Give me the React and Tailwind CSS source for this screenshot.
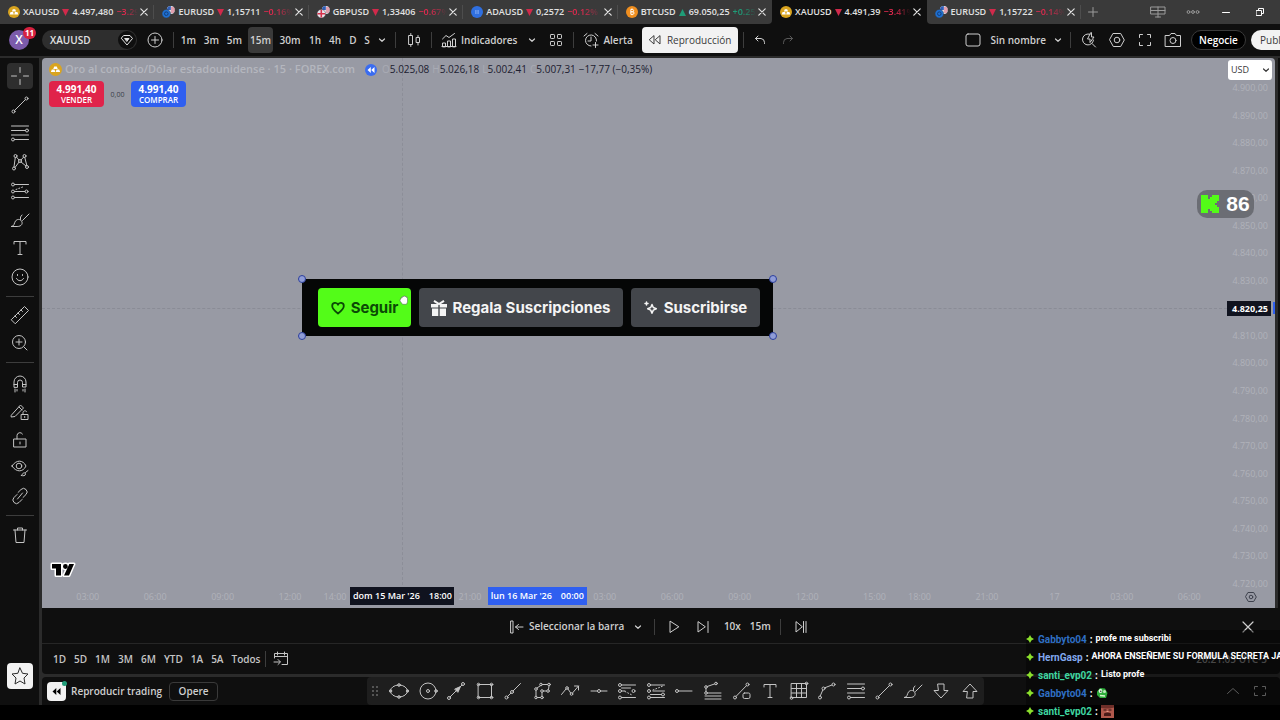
import React from "react";

function Ic({ size = 20, sw = 1, className = "", children }) {
  return (
    <svg width={size} height={size} viewBox={`0 0 ${size} ${size}`} fill="none" stroke="currentColor" strokeWidth={sw} strokeLinecap="round" strokeLinejoin="round" className={`shrink-0 ${className}`} aria-hidden="true">
      {children}
    </svg>
  );
}

const Chevron = ({ className = "" }) => (
  <Ic size={8} sw={1.2} className={className}><path d="M1.5 3 4 5.300 6.500 3" /></Ic>
);
const Close = ({ size = 8 }) => (
  <Ic size={size} sw={1.2}><path d={size === 8 ? "M.8.8l6.4 6.4M7.2.8.8 7.2" : "M1 1l10 10M11 1 1 11"} /></Ic>
);
const Divider = ({ className = "" }) => <span className={`h-4 w-px shrink-0 bg-[#3d3d3d] ${className}`} />;

/* ---------- symbol logos ---------- */
const Gold = ({ size = 12 }) => (
  <svg width={size} height={size} viewBox="0 0 12 12" className="shrink-0" aria-hidden="true">
    <circle cx="6" cy="6" r="6" fill="#d9a41f" />
    <path d="M4.8 3.200h2.400l.9 2.300H3.900zM2.600 6h2.500l.7 2.400H1.700zM6.900 6h2.500l.9 2.400H6.200z" fill="#fff" />
  </svg>
);
const Pair = ({ gbp }) => (
  <svg width="13" height="12" viewBox="0 0 13 12" className="shrink-0" aria-hidden="true">
    <circle cx="8.800" cy="4" r="4" fill="#e8e8f0" />
    <path d="M8.800 2h3.400M8.800 4h4M9 6h3" stroke="#d9455c" strokeWidth=".9" />
    <path d="M4.900 3.200A4 4 0 0 1 8.800 0v4H4.800z" fill="#2f5fb8" />
    <circle cx="4.300" cy="7.700" r="4.300" fill={gbp ? "#e9e4ee" : "#1f6fd0"} stroke="#3a3a3a" strokeWidth=".5" />
    {gbp ? <path d="M4.300 3.800v7.800M.4 7.700h7.800" stroke="#d6324b" strokeWidth="1.600" /> : <circle cx="4.300" cy="7.700" r="1.800" fill="none" stroke="#123a72" strokeWidth=".9" />}
  </svg>
);
const Ada = () => (
  <svg width="12" height="12" viewBox="0 0 12 12" className="shrink-0" aria-hidden="true">
    <circle cx="6" cy="6" r="6" fill="#2f6fe0" />
    <path d="M4.200 5h3.600M4.200 7h3.600" stroke="#b9d2ff" strokeWidth="1" strokeDasharray="1 .4" />
  </svg>
);
const Btc = () => (
  <svg width="12" height="12" viewBox="0 0 12 12" className="shrink-0" aria-hidden="true">
    <circle cx="6" cy="6" r="6" fill="#ef8e1f" />
    <path d="M4.800 3.500h1.700a1.100 1.100 0 0 1 0 2.300H4.800zM4.800 5.800h2a1.200 1.200 0 0 1 0 2.500h-2zM5.500 2.700v.8M6.500 2.700v.8M5.500 8.300v.8M6.500 8.300v.8" fill="none" stroke="#fff" strokeWidth=".9" />
  </svg>
);

const tabs = [
  { s: "XAUUSD", p: "4.497,480", c: "−3.29%", logo: <Gold /> },
  { s: "EURUSD", p: "1,15711", c: "−0.16%", logo: <Pair /> },
  { s: "GBPUSD", p: "1,33406", c: "−0.67%", logo: <Pair gbp /> },
  { s: "ADAUSD", p: "0,2572", c: "−0.12%", logo: <Ada /> },
  { s: "BTCUSD", p: "69.050,25", c: "+0.25%", logo: <Btc />, up: true },
  { s: "XAUUSD", p: "4.491,39", c: "−3.41%", logo: <Gold />, active: true },
  { s: "EURUSD", p: "1,15722", c: "−0.14%", logo: <Pair /> },
];

function TabBar() {
  return (
    <header className="flex h-6 shrink-0 items-stretch bg-[#0f0f0f] text-[#e2e2e2]">
      <nav className="flex min-w-0 flex-1" aria-label="Pestañas">
        {tabs.map((t, i) => (
          <div key={i} className={`flex min-w-0 flex-1 basis-0 items-center pl-2 pr-[5px] ${t.active ? "bg-[#0f0f0f]" : "bg-[#3a3a3a]"} ${(tabs[i + 1] || {}).active ? "rounded-br" : ""} ${(tabs[i - 1] || {}).active ? "rounded-bl" : ""}`}>
            <a href="#tab" className="flex min-w-0 flex-1 items-center whitespace-nowrap text-[9px] font-semibold">
              {t.logo}
              <span className="ml-[3px]">{t.s}</span>
              <svg width="7" height="7" viewBox="0 0 7 7" className="mx-[3px] shrink-0" aria-hidden="true">
                <path d={t.up ? "M3.500 0 7 7H0z" : "M0 0h7L3.500 7z"} fill={t.up ? "#1f9c78" : "#d02a4b"} />
              </svg>
              <span>{t.p}</span>
              <span className={`ml-[3px] min-w-0 flex-1 overflow-hidden [mask-image:linear-gradient(to_right,#000_40%,transparent)] ${t.up ? "text-[#1f9c78]" : "text-[#e02a4f]"}`}>{t.c}</span>
            </a>
            <button aria-label="Cerrar pestaña" className="flex w-3 shrink-0 justify-center"><Close /></button>
            <span className={`-mr-[5px] ml-[3px] h-3.5 w-px ${t.active || (tabs[i + 1] || {}).active ? "" : "bg-[#4d4d4d]"}`} />
          </div>
        ))}
      </nav>
      <div className="flex w-[199px] shrink-0 items-center bg-[#3a3a3a] text-[#9a9a9a]">
        <button aria-label="Nueva pestaña" className="flex w-6 justify-center"><Ic size={10}><path d="M5 .5v9M.5 5h9" /></Ic></button>
        <button aria-label="Diseños" className="ml-[35px] flex w-9 justify-center">
          <Ic size={16}><path d="M1 3h14v7H1zM1 6.500h14M8 3v10M5.500 13h5" /></Ic>
        </button>
        <button aria-label="Más" className="flex w-[34px] justify-center">
          <Ic size={14}><circle cx="2.500" cy="7" r="1.400" /><circle cx="7" cy="7" r="1.400" /><circle cx="11.500" cy="7" r="1.400" /></Ic>
        </button>
        <button aria-label="Minimizar" className="flex w-8 justify-center text-white"><Ic size={8}><path d="M.5 4.500h7" /></Ic></button>
        <button aria-label="Restaurar" className="flex w-9 justify-center text-white">
          <Ic size={8}><path d="M.5 2.500h5v5h-5zM2.500 2.500v-2h5v5h-2" /></Ic>
        </button>
      </div>
    </header>
  );
}

const intervals = [
  ["1m", "w-[23px]"], ["3m", "w-[23px]"], ["5m", "w-[23px]"], ["15m", "w-[25px] mx-[2px] bg-[#3a3a3a] rounded h-[26px]"],
  ["30m", "w-[30px]"], ["1h", "w-5"], ["4h", "w-5"], ["D", "w-4"], ["S", "w-3"],
];

function Toolbar() {
  return (
    <div className="flex h-8 shrink-0 items-center overflow-hidden bg-[#0f0f0f] text-[10px] font-semibold text-[#cfcfcf]">
      <button aria-label="Cuenta" className="relative ml-[9px] flex size-5 shrink-0 items-center justify-center rounded-full bg-[#7b5bab] text-[12px] text-white">
        X
        <span className="absolute -right-[7px] -top-[3px] flex h-3 w-[13px] items-center justify-center rounded-full bg-[#d7213f] text-[8px] font-bold">11</span>
      </button>
      <button className="ml-[13px] flex h-5 w-[95px] shrink-0 items-center justify-between rounded-full bg-[#2e2e2e] pl-2 pr-[1px] text-[#e2e2e2]">
        XAUUSD
        <span className="flex size-[18px] items-center justify-center rounded-full bg-[#0f0f0f]">
          <Ic size={14}><path d="M4 2.500h6l2.500 3L7 12 1.500 5.500z" /><path d="M5 5.500h4L7 8.200z" fill="currentColor" /></Ic>
        </span>
      </button>
      <button aria-label="Comparar" className="ml-2 flex w-5 shrink-0 justify-center"><Ic size={16}><circle cx="8" cy="8" r="7" /><path d="M8 4.500v7M4.500 8h7" /></Ic></button>
      <Divider className="ml-2" />
      <div className="ml-[3px] flex items-center">
        {intervals.map(([t, c]) => <button key={t} className={`shrink-0 text-center ${c}`}>{t}</button>)}
      </div>
      <button aria-label="Más intervalos" className="ml-[1px] flex w-4 shrink-0 justify-center"><Chevron /></button>
      <Divider className="ml-[5px]" />
      <button aria-label="Velas" className="flex w-[35px] shrink-0 justify-center">
        <Ic size={16}><path d="M3 3.500h3.500v9H3zM4.800 1.500v2M4.800 12.500v2M10.500 5.500h3v5h-3zM12 3.500v2M12 10.500v2.500" /></Ic>
      </button>
      <Divider />
      <button className="ml-[9px] flex shrink-0 items-center gap-1">
        <Ic size={16}><path d="M1.500 14.500V11h3v3.500zM6.500 14.500V9h3v5.500zM11.500 14.500V7h3v7.500zM1 14.500h14M1.500 7l3.500-3.500 3 2L13.500 1.500" /></Ic>
        Indicadores
      </button>
      <button aria-label="Favoritos" className="ml-[7px] flex w-4 shrink-0 justify-center"><Chevron /></button>
      <button aria-label="Plantillas" className="ml-2 flex w-4 shrink-0 justify-center">
        <Ic size={14}><rect x="1.500" y="1.500" width="4" height="4" rx=".7" /><rect x="8.500" y="1.500" width="4" height="4" rx=".7" /><rect x="1.500" y="8.500" width="4" height="4" rx=".7" /><rect x="8.500" y="8.500" width="4" height="4" rx=".7" /></Ic>
      </button>
      <Divider className="ml-[9px]" />
      <button className="ml-[9px] flex shrink-0 items-center gap-1">
        <Ic size={16}><path d="M13.500 9A5.500 5.500 0 1 0 8 14M8 5v4H5M1 4l3-2.500M12 1.500 15 4M12.500 10.500v5M10 13h5" /></Ic>
        Alerta
      </button>
      <button className="ml-[9px] flex h-[26px] w-24 shrink-0 items-center justify-center gap-[5px] rounded bg-[#f2f2f2] font-medium text-[#3a3a3a]">
        <Ic size={14}><path d="M6 3v8L1.500 7zM12 3v8L7.500 7z" /></Ic>
        Reproducción
      </button>
      <Divider className="ml-[5px]" />
      <button aria-label="Deshacer" className="ml-[6px] flex w-5 shrink-0 justify-center"><Ic size={12}><path d="M4 2 1.500 4.500 4 7M1.500 4.500H7A4 4 0 0 1 10.500 8.500V9.500" /></Ic></button>
      <button aria-label="Rehacer" className="ml-2 flex w-5 shrink-0 justify-center text-[#5a5a5a]"><Ic size={12}><path d="M8 2l2.500 2.500L8 7M10.500 4.500H5A4 4 0 0 0 1.500 8.500V9.500" /></Ic></button>
      <div className="ml-auto flex shrink-0 items-center">
        <button className="flex items-center gap-[9px]">
          <Ic size={16}><rect x="1" y="2" width="14" height="12" rx="2" /></Ic>
          Sin nombre
        </button>
        <button aria-label="Diseños guardados" className="ml-1 flex w-4 justify-center"><Chevron /></button>
        <Divider className="ml-1" />
        <button aria-label="Búsqueda" className="ml-1 flex w-7 justify-center">
          <Ic size={16}><path d="M9 2.300A5.500 5.500 0 1 0 12.500 8M11 11.500l3.500 3.500M9.500 1 6.500 7H9v3.500L13 5h-2.500V1z" /></Ic>
        </button>
        <button aria-label="Configuración" className="flex w-7 justify-center">
          <Ic size={16}><path d="M4.300 1.500h7.400L15.300 8l-3.600 6.500H4.300L.7 8z" /><circle cx="8" cy="8" r="2.800" /></Ic>
        </button>
        <button aria-label="Pantalla completa" className="flex w-7 justify-center">
          <Ic size={14}><path d="M1.500 4.500v-3h3M9.500 1.500h3v3M12.500 9.500v3h-3M4.500 12.500h-3v-3" /></Ic>
        </button>
        <button aria-label="Captura" className="flex w-7 justify-center">
          <Ic size={18}><path d="M1.500 4.500h4L7 2.500h4l1.500 2h4v11h-15z" /><circle cx="9" cy="9.500" r="3" /></Ic>
        </button>
        <button className="ml-1 flex h-5 w-[55px] items-center justify-center rounded-full border border-[#3a3a3a] bg-black text-white">Negocie</button>
        <button className="ml-[5px] flex h-5 w-[29px] items-center overflow-hidden rounded-l-full bg-[#f2f2f2] pl-[9px] font-medium text-[#3a3a3a]">Publicar</button>
      </div>
    </div>
  );
}

/* ---------- drawing tools, drawn on a 20px square ---------- */
const dot = (cx, cy, r = 1.500) => <circle cx={cx} cy={cy} r={r} />;
const I = {
  cross: <path d="M10 1.500v5M10 13.500v5M1.500 10h5M13.500 10h5" />,
  trend: <>{dot(3.500, 16.500)}{dot(16.500, 3.500)}<path d="M4.600 15.400 15.400 4.600" /></>,
  fib: <><path d="M1.500 3h17M1.500 7.500h14M1.500 12h17M4.500 16.500h14" />{dot(17, 7.500)}{dot(3, 16.500)}</>,
  pattern: <>{dot(4, 16.500)}{dot(5.500, 4)}{dot(10, 9)}{dot(14.500, 4)}{dot(17, 15)}<path d="M4 15 5.300 5.500M6.500 5.100 9 8M11 8l2.600-2.900M14.800 5.500l2 8M5 15.500l4-5.400M11 10l5 4" /></>,
  forecast: <>{dot(3, 3.500)}{dot(3, 10.500)}{dot(3, 16.500)}{dot(16.500, 10.500)}<path d="M4.500 3.500h14M4.500 10.500H15M4.500 16.500h14" /><path d="M6 8.500l8-3" strokeDasharray="1 2" /></>,
  brush: <path d="M1.500 16.500c3 0 2.500-3.500 4-5.500s4.500-2.200 6 0 .5 5.500-4 5.500zM10.500 9.500V7l1.500-2M12.500 10.500l6.500-6.500" />,
  text: <path d="M4 6V3.500h12V6M10 3.500v13M8 16.500h4" />,
  smile: <><circle cx="10" cy="10" r="8" /><path d="M6.500 11.500c1.500 3 5.500 3 7 0M7.500 7.500v1M12.500 7.500v1" /></>,
  ruler: <path d="M1.500 14.500 14.500 1.500l4 4-13 13zM5 11l1.500 1.500M8 8l1.500 1.500M11 5l1.500 1.500" />,
  zoom: <><circle cx="9" cy="9" r="6.500" /><path d="M9 6v6M6 9h6M14 14l3 3" /></>,
  magnet: <path d="M4 13V8a6 6 0 0 1 12 0v5h-3.500V8.500a2.500 2.500 0 0 0-5 0V13zM4 10.500h3.500M12.500 10.500H16M5 15v3M7 15.500v1.500M13 15.500v1.500M15 15v3" />,
  penlock: <><path d="M1.500 13 10.500 3l3 3L5 14.500l-3.500.5zM9 5l3 3" /><path d="M11.500 12.500h6.500v5h-6.500zM13 12.500v-2a2 2 0 0 1 3.500-1M14.700 14.500v1" /></>,
  lock: <path d="M4 9h12v8H4zM7 9V5.500a3 3 0 0 1 5.500-1.500M10 12v2" />,
  eye: <><path d="M2 8c4-6.500 11-6.500 14 0-3 6.500-10 6.500-14 0z" /><circle cx="9" cy="8" r="2.800" /><path d="M11.500 17.500c1-3 4-3.500 4-1.500s-2.500 2-4 1.500zM15.500 14.500l2.500-2" /></>,
  link: <path d="M8 6.500 11 3.500a3.300 3.300 0 0 1 5 5L13 11.500M12 13.500l-3 3a3.300 3.300 0 0 1-5-5L7 8.500M7.500 13l5-6" />,
  trash: <path d="M3.500 5h13M7.500 5V3h5v2M5 5l1 12.500h8L15 5" />,
  star: <path d="M10 2l2.500 5.300 5.500.7-4 4 1 6-5-3-5 3 1-6-4-4 5.500-.7z" />,
  ellipse: <><ellipse cx="10" cy="10" rx="8.500" ry="6" />{dot(10, 4, 1.300)}{dot(10, 16, 1.300)}{dot(1.500, 10, 1.200)}{dot(18.500, 10, 1.200)}</>,
  circle: <><circle cx="10" cy="10" r="8" />{dot(10, 10)}{dot(18, 10, 1.300)}</>,
  arrow: <>{dot(3, 17)}{dot(17, 3)}<path d="M4 16 16 4" /><path d="M9 8l5.500-2.500L12 11z" fill="currentColor" /></>,
  rect: <><path d="M3.500 3.500h13v13h-13z" />{dot(3.500, 3.500, 1.300)}{dot(16.500, 3.500, 1.300)}{dot(3.500, 16.500, 1.300)}{dot(16.500, 16.500, 1.300)}</>,
  ray: <>{dot(3.500, 16.500)}{dot(9, 11)}<path d="M4.600 15.400 8 12M10 10l7.500-7.500" /></>,
  path: <>{dot(4, 8, 1.300)}{dot(4, 16.500, 1.300)}{dot(10, 16.500, 1.300)}{dot(10, 10, 1.300)}{dot(9, 3.500, 1.300)}{dot(17, 3.500, 1.300)}{dot(16, 10, 1.300)}<path d="M4 9.500v5.500M5.500 16.500h3M10 15v-3.500M11.500 10h3M16.500 8.500 17 5M15.500 3.500h-5M8.300 4.800 5 7" /></>,
  zig: <>{dot(7, 7, 1.300)}{dot(11.500, 13, 1.300)}<path d="M1.500 13.500 6 8M8 8l2.700 4M12.500 12 18.500 5M14.500 5h4v4" /></>,
  hline: <>{dot(10, 10)}<path d="M2 10h6.500M11.500 10H18" /></>,
  proj: <>{dot(3, 4)}{dot(3, 10)}{dot(3, 16.500)}{dot(16.500, 10)}<path d="M4.500 4h14M4.500 7h9M4.500 10H8M4.500 16.500h14" /><path d="M8 10.500l8 4" strokeDasharray="1 2" /></>,
  proj2: <>{dot(3, 4)}{dot(3, 10)}{dot(3, 16.500)}{dot(17, 13.500)}<path d="M4.500 4h14M4.500 16.500h14M4.500 13.500h11M7 10h11.500" /><path d="M7 9l10-4" strokeDasharray="1 2" /></>,
  hray: <>{dot(3, 10)}<path d="M4.500 10H18" /></>,
  pitch: <>{dot(3, 6, 1.300)}{dot(3, 12, 1.300)}{dot(13, 2.500, 1.300)}<path d="M4.200 5.500l7.500-2.600M3 7.300v3.400M4.500 12H18M2 15h16M2 18h16" /></>,
  trendbox: <>{dot(3, 16.500)}{dot(15.500, 3.500)}<path d="M4 15.400 14.500 4.600" /><rect x="11" y="12" width="7" height="5.500" rx="1.500" /></>,
  grid: <><path d="M2.500 2.500h15v14h-15zM2.500 7.500h15M2.500 12h15M7.500 2.500v14M12.500 2.500v14" />{dot(17.500, 2.500, 1.300)}{dot(2.500, 17, 1.300)}</>,
  arc: <>{dot(3, 16.500)}{dot(6.500, 7.500)}{dot(16.500, 3.500)}<path d="M3.200 15 5.800 9M8 6.700l7-2.700" /></>,
  down: <path d="M7 3h6v6.500h4L10 17 3 9.500h4z" />,
  up: <path d="M7 17h6v-6.500h4L10 3l-7 7.500h4z" />,
};

const sideGroups = [
  [["cross", "Cursor"], ["trend", "Líneas"], ["fib", "Fibonacci"], ["pattern", "Patrones"], ["forecast", "Previsión"], ["brush", "Pincel"], ["text", "Texto"], ["smile", "Emojis"]],
  [["ruler", "Medir"], ["zoom", "Acercar"]],
  [["magnet", "Imán"], ["penlock", "Modo dibujo"], ["lock", "Bloquear"], ["eye", "Ocultar"], ["link", "Vincular"]],
  [["trash", "Eliminar"]],
];
const groupClass = ["h-[227px] justify-between", "gap-[2px] mt-[5px]", "gap-[2px] mt-2", "mt-[6px]"];

function Sidebar() {
  return (
    <aside className="flex w-[39px] shrink-0 flex-col items-center bg-[#0f0f0f] pt-[5px] text-[#c4c4c4]">
      {sideGroups.map((g, gi) => (
        <React.Fragment key={gi}>
          {gi > 0 && <span className="mt-[6px] h-px w-7 bg-[#3d3d3d]" />}
          <div className={`flex flex-col ${groupClass[gi]}`}>
            {g.map(([k, label]) => (
              <button key={k} aria-label={label} className={`flex size-[26px] items-center justify-center rounded ${k === "cross" ? "bg-[#2e2e2e]" : ""}`}>
                <Ic>{I[k]}</Ic>
              </button>
            ))}
          </div>
        </React.Fragment>
      ))}
      <button aria-label="Favoritos" className="mb-4 mt-auto flex size-[26px] items-center justify-center rounded bg-[#f2f2f2] text-[#2a2a2a]">
        <Ic>{I.star}</Ic>
      </button>
    </aside>
  );
}

/* ---------- chart ---------- */
const prices = Array.from({ length: 19 }, (_, i) => `4.${900 - i * 10},00`);
const ticks = [
  [0, "03:00"], [3, "06:00"], [6, "09:00"], [9, "12:00"], [11, "14:00"], [17, "21:00"], [23, "03:00"], [26, "06:00"], [29, "09:00"],
  [32, "12:00"], [35, "15:00"], [37, "18:00"], [40, "21:00"], [43, "17"], [46, "03:00"], [49, "06:00"],
];
const handles = ["-left-1 -top-1", "-right-1 -top-1", "-left-1 -bottom-1", "-right-1 -bottom-1"];

function FollowCard() {
  return (
    <div className="absolute left-[260px] top-[221px] flex h-[57px] w-[471px] items-center gap-2 bg-[#050606] pl-4 font-['Inter',sans-serif] text-[15px] font-bold text-[#f4f4f4]">
      {handles.map((h) => <span key={h} className={`absolute size-2 rounded-full border border-[#2c3f9c] bg-[#8f9cd6] ${h}`} />)}
      <button className="flex h-[39px] w-[93px] items-center justify-center gap-[6px] rounded bg-[#53fc18] pt-px text-[#0b4a06]">
        <Ic size={14} sw={1.800}><path d="M7 12.500C3.500 9.800 1.200 7.700 1.200 5A3 3 0 0 1 7 3.800 3 3 0 0 1 12.800 5C12.800 7.700 10.500 9.800 7 12.500z" /></Ic>
        Seguir
      </button>
      <button className="flex h-[39px] w-[204px] items-center justify-center gap-[5px] rounded bg-[#43464b] pt-px">
        <svg width="16" height="16" viewBox="0 0 16 16" fill="currentColor" className="shrink-0" aria-hidden="true">
          <path d="M0 4h7.300v3.500H0zM8.700 4H16v3.500H8.700zM1 8.500h6.300V16H1zM8.700 8.500H15V16H8.700z" />
          <path d="M3 .8 8 4l5-3.200" fill="none" stroke="currentColor" strokeWidth="2" />
        </svg>
        Regala Suscripciones
      </button>
      <button className="flex h-[39px] w-[129px] items-center justify-center gap-[6px] rounded bg-[#43464b] pt-px">
        <Ic size={14} sw={1.500}><path d="M8 3.500l1.300 3 3 1.300-3 1.300L8 12.200 6.700 9.100l-3-1.300 3-1.300zM2.500 1v3M1 2.500h3" /></Ic>
        Suscribirse
      </button>
      <svg width="10" height="10" viewBox="0 0 10 10" className="absolute left-[97px] top-4" aria-hidden="true">
        <path d="M2 4V2.500h1.300V1.500h1.400V1h1.400v.5h1.400v1h1V7L7.500 9.300h-4L1 6V4.500z" fill="#fff" stroke="#5d6f5d" strokeWidth=".6" />
      </svg>
    </div>
  );
}

const ohlc = [["O", "5.025,08"], ["H", "5.026,18"], ["L", "5.002,41"], ["C", "5.007,31"]];

function Chart() {
  return (
    <main className="relative flex min-h-0 flex-1 flex-col overflow-hidden rounded-t bg-[#989aa4]">
      <div className="flex min-h-0 flex-1">
        <section className="relative min-w-0 flex-1" aria-label="Gráfico">
          <div className="pointer-events-none absolute inset-0 grid grid-cols-[repeat(52,minmax(0,1fr))] pl-3">
            <span className="col-start-[16] justify-self-center border-l border-dashed border-[#8c8e98]" />
          </div>
          <span className="absolute -right-1 left-0 top-[250px] border-t border-dashed border-[#8a8c96]" />
          <div className="relative flex h-[23px] items-center whitespace-nowrap pl-[7px] text-[10px] font-medium text-[#1c2030]">
            <Gold size={13} />
            <h1 className="ml-[3px] text-[11px] font-semibold text-[#b4b6be]">Oro al contado/Dólar estadounidense · 15 · FOREX.com</h1>
            <span className="ml-[10px] flex size-3 items-center justify-center rounded-full bg-[#3a6cf0] text-white">
              <svg width="8" height="6" viewBox="0 0 8 6" fill="currentColor" aria-hidden="true"><path d="M3.800 0v6L.5 3zM7.500 0v6L4.200 3z" /></svg>
            </span>
            <div className="ml-[5px] flex items-center gap-[3px]">
              {ohlc.map(([k, v]) => <span key={k}><span className="text-[#a9abb4]">{k}</span>{v}</span>)}
              <span>−17,77 (−0,35%)</span>
            </div>
          </div>
          <div className="relative flex items-center gap-[6px] pl-[7px] text-center text-[10px] font-bold leading-[11px] text-white">
            <button className="h-[26px] w-[55px] rounded bg-[#e0234a]">4.991,40<span className="block text-[8px] font-semibold leading-[10px]">VENDER</span></button>
            <span className="w-[15px] text-[7px] font-normal text-[#3a3d49]">0,00</span>
            <button className="h-[26px] w-[55px] rounded bg-[#2f5ff0]">4.991,40<span className="block text-[8px] font-semibold leading-[10px]">COMPRAR</span></button>
          </div>
          <FollowCard />
          <svg width="26" height="16" viewBox="0 0 26 16" className="absolute bottom-3 left-2" aria-label="TradingView">
            <path d="M2 2h9v11.500H6V6.500H2zM13 4.500a2.400 2.400 0 1 0 4.800 0 2.400 2.400 0 1 0-4.800 0M19.300 2H24l-5 11.500h-5z" fill="#000" stroke="#fff" strokeWidth="3" strokeLinejoin="round" />
            <path d="M2 2h9v11.500H6V6.500H2zM13 4.500a2.400 2.400 0 1 0 4.800 0 2.400 2.400 0 1 0-4.800 0M19.300 2H24l-5 11.500h-5z" fill="#000" />
          </svg>
        </section>
        <div className="relative flex w-[52px] shrink-0 flex-col justify-between pr-[7px] pt-6 text-right text-[9px] leading-3 text-[#b0b2ba]">
          <select aria-label="Divisa" className="absolute right-[3px] top-[2px] h-5 w-11 appearance-none rounded-[3px] bg-white pl-[3px] text-[9px] text-[#3a3a3a]" defaultValue="USD">
            <option>USD</option>
          </select>
          <Chevron className="pointer-events-none absolute right-[5px] top-2 text-[#3a3a3a]" />
          {prices.map((p) => <span key={p}>{p}</span>)}
          <span className="absolute right-1 top-[243px] flex h-[15px] w-11 items-center justify-end bg-[#10131f] pr-[3px] font-bold text-white">4.820,25</span>
          <span className="absolute right-0 top-[244px] h-3 w-[2px] bg-[#2f5ff0]" />
        </div>
      </div>
      <div className="flex h-[18px] items-start text-[9px] leading-[14px] text-[#b0b2ba]">
        <div className="grid min-w-0 flex-1 grid-cols-[repeat(52,minmax(0,1fr))] pl-3">
          {ticks.map(([n, t]) => (
            <span key={n} className="row-start-1 justify-self-center whitespace-nowrap" style={{ gridColumnStart: n + 2 }}>{t}</span>
          ))}
          <span className="relative col-start-[16] row-start-1 -mt-[3px] flex h-[18px] w-[104px] items-center justify-center gap-[9px] justify-self-center whitespace-nowrap bg-[#10131f] font-semibold text-white"><span>dom 15 Mar '26</span><span>18:00</span></span>
          <span className="relative col-start-[22] row-start-1 -mt-[3px] flex h-[18px] w-[99px] items-center justify-center gap-[9px] justify-self-center whitespace-nowrap bg-[#2f5ff0] font-semibold text-white"><span>lun 16 Mar '26</span><span>00:00</span></span>
        </div>
        <button aria-label="Ajustes de escala" className="flex w-[52px] justify-center pl-[3px] pt-px text-[#3d404c]">
          <Ic size={12}><path d="M3.300 1.500h5.400L11.300 6l-2.600 4.500H3.300L.7 6z" /><circle cx="6" cy="6" r="1.800" /></Ic>
        </button>
      </div>
      <div className="absolute right-[21px] top-[132px] flex h-7 w-[57px] items-center justify-center gap-[7px] rounded-[10px] bg-[#6b6d74] font-['Liberation_Sans',sans-serif] text-[21px] font-bold text-white">
        <svg width="18" height="20" viewBox="0 0 18 20" fill="#53fc18" aria-label="Kick"><path d="M0 1h7v4h2V3h2V1h7v6h-2v2h-2v2h2v2h2v6h-7v-2H9v-2H7v4H0z" /></svg>
        86
      </div>
    </main>
  );
}

function ReplayBar() {
  return (
    <div className="flex h-9 shrink-0 items-center border-b border-[#262626] bg-[#0f0f0f] pl-[467px] pr-6 pt-[2px] text-[10px] font-semibold text-[#cfcfcf]">
      <button className="flex shrink-0 items-center gap-1 whitespace-nowrap">
        <Ic size={16}><path d="M2 2h2v12H2zM6.500 8H14M9.500 5.500 6.500 8l3 2.500" /></Ic>
        Seleccionar la barra
      </button>
      <button aria-label="Opciones" className="ml-[6px] flex w-4 justify-center"><Chevron /></button>
      <Divider className="ml-2" />
      <button aria-label="Reproducir" className="ml-[5px] flex w-7 justify-center"><Ic size={14}><path d="M3 1.500v11L11.500 7z" /></Ic></button>
      <button aria-label="Avanzar" className="ml-[1px] flex w-7 justify-center"><Ic size={14}><path d="M2 2v10l7-5zM12 1.500v11" /></Ic></button>
      <button className="ml-[3px] w-6">10x</button>
      <button className="ml-1 w-6">15m</button>
      <Divider className="ml-2" />
      <button aria-label="Tiempo real" className="ml-[6px] flex w-7 justify-center"><Ic size={14}><path d="M2 2v10l6-5zM9.500 1.500v11M12 1.500v11" /></Ic></button>
      <button aria-label="Cerrar" className="ml-auto flex w-4 justify-center"><Close size={12} /></button>
    </div>
  );
}

const ranges = ["1D", "5D", "1M", "3M", "6M", "YTD", "1A", "5A", "Todos"];
function RangeBar() {
  return (
    <div className="flex h-[30px] shrink-0 items-center rounded-b bg-[#0f0f0f] pl-[11px] pr-[13px] text-[10px] font-semibold text-[#c4c4c4]">
      <div className="flex gap-2">{ranges.map((r) => <button key={r}>{r}</button>)}</div>
      <Divider className="ml-[5px]" />
      <button aria-label="Ir a" className="ml-[7px]"><Ic size={16}><path d="M1.500 7V2.500h13v11H9M1.500 5.500h13M4.500 1v3M11.500 1v3M1 11h6M5 8.500 7.500 11 5 13.500" /></Ic></button>
      <span className="ml-auto whitespace-nowrap text-[#777]">20:21:05 UTC-3</span>
    </div>
  );
}

const drawTools = ["ellipse", "circle", "arrow", "rect", "ray", "path", "zig", "hline", "proj", "proj2", "hray", "pitch", "trendbox", "text", "grid", "arc", "fib", "trend", "brush", "down", "up"];
function BottomBar() {
  return (
    <div className="flex h-7 shrink-0 items-center rounded-t bg-[#0f0f0f] text-[10px] font-semibold text-[#cfcfcf]">
      <div className="flex w-[325px] shrink-0 items-center pl-[5px]">
        <button aria-label="Reproducción" className="relative flex size-[19px] items-center justify-center rounded bg-[#f2f2f2] text-black">
          <svg width="9" height="7" viewBox="0 0 9 7" fill="currentColor" aria-hidden="true"><path d="M4.300 0v7L.5 3.500zM8.500 0v7L4.700 3.500z" /></svg>
          <span className="absolute -right-[1px] -top-[1px] size-[5px] rounded-full bg-[#1f9c78]" />
        </button>
        <span className="ml-[5px] whitespace-nowrap">Reproducir trading</span>
        <button className="ml-[7px] h-[19px] w-[49px] rounded border border-[#3a3a3a]">Opere</button>
      </div>
      <div className="flex h-7 w-[617px] shrink-0 items-center rounded bg-[#1e1e1e] text-[#c4c4c4]">
        <span className="ml-[5px] grid grid-cols-2 gap-[2px]">
          {Array.from({ length: 6 }, (_, i) => <i key={i} className="size-[2px] bg-[#555]" />)}
        </span>
        <div className="ml-[11px] mr-1 flex min-w-0 flex-1 justify-between">
          {drawTools.map((k) => <button key={k} aria-label={k} className="flex w-5 justify-center"><Ic>{I[k]}</Ic></button>)}
        </div>
      </div>
      <button aria-label="Subir" className="ml-auto flex w-5 justify-center text-[#9a9a9a]"><Ic size={14}><path d="M1.500 9.500 7 4.500l5.500 5" /></Ic></button>
      <button aria-label="Maximizar" className="ml-[7px] mr-[10px] flex w-5 justify-center text-[#9a9a9a]"><Ic size={14}><path d="M1.500 5V2.500h3M9.500 2.500h3V5M12.500 9v2.500h-3M4.500 11.500h-3V9" /></Ic></button>
    </div>
  );
}

/* ---------- chat ---------- */
const Frog = () => (
  <svg width="12" height="12" viewBox="0 0 12 12" aria-hidden="true">
    <path d="M1 4.500 4 1l5 .5L11.500 6 10 11H4L1 8z" fill="#2fae3c" /><circle cx="4.500" cy="4" r="1.900" fill="#e9f6e6" /><circle cx="8.500" cy="4.500" r="1.500" fill="#bfe8bd" /><circle cx="4.800" cy="4.200" r=".7" fill="#0a2a10" /><path d="M4 8.500l5 .5" stroke="#d8f5d0" strokeWidth="1.500" />
  </svg>
);
const Face = () => (
  <svg width="13" height="13" viewBox="0 0 13 13" aria-hidden="true">
    <path d="M0 0h13v13H0z" fill="#b0584c" /><path d="M0 0h13v2.500L9 3.500H4L0 3z" fill="#6e2f29" /><path d="M2.500 5h3M7.500 5h3" stroke="#2c1210" strokeWidth="1.200" /><path d="M3 8.500c2-1.500 5-1.500 7 0v2.500H3z" fill="#481a18" /><path d="M5.500 6.500h2" stroke="#e09a88" />
  </svg>
);
const messages = [
  ["Gabbyto04", "text-[#2f6fc4]", "profe me subscribi"],
  ["HernGasp", "text-[#82a8ee]", "AHORA ENSEÑEME SU FORMULA SECRETA JAJA"],
  ["santi_evp02", "text-[#3fd6a0]", "Listo profe"],
  ["Gabbyto04", "text-[#2f6fc4]", <Frog key="f" />],
  ["santi_evp02", "text-[#3fd6a0]", <Face key="c" />],
];
function Chat() {
  return (
    <ul className="absolute bottom-0 right-0 w-[254px] overflow-hidden bg-black/40 font-['Roboto',sans-serif] text-[10px] font-bold text-white">
      {messages.map(([n, c, m], i) => (
        <li key={i} className="flex h-[18px] items-center whitespace-nowrap">
          <svg width="8" height="8" viewBox="0 0 8 8" className="mr-1 shrink-0" aria-hidden="true"><path d="M4 0l1.400 2.600L8 4 5.400 5.400 4 8 2.600 5.400 0 4l2.600-1.400z" fill="#8be02c" /></svg>
          <span className={c}>{n}</span><span className="mx-[3px]">:</span><span className="text-[9px]">{m}</span>
        </li>
      ))}
    </ul>
  );
}

export default function App() {
  return (
    <div className="relative flex h-screen flex-col overflow-hidden bg-black font-['Open_Sans',sans-serif]">
      <TabBar />
      <Toolbar />
      <div className="flex min-h-0 flex-1 bg-[#2b2b2b] pt-[2px]">
        <Sidebar />
        <div className="ml-[3px] flex min-w-0 flex-1 flex-col">
          <div className="flex min-h-0 flex-1">
            <Chart />
            <div className="ml-[3px] w-[2px] bg-[#0f0f0f]" />
          </div>
          <ReplayBar />
          <RangeBar />
          <div className="h-[3px] shrink-0" />
          <BottomBar />
        </div>
      </div>
      <div className="h-[15px] shrink-0" />
      <Chat />
    </div>
  );
}
